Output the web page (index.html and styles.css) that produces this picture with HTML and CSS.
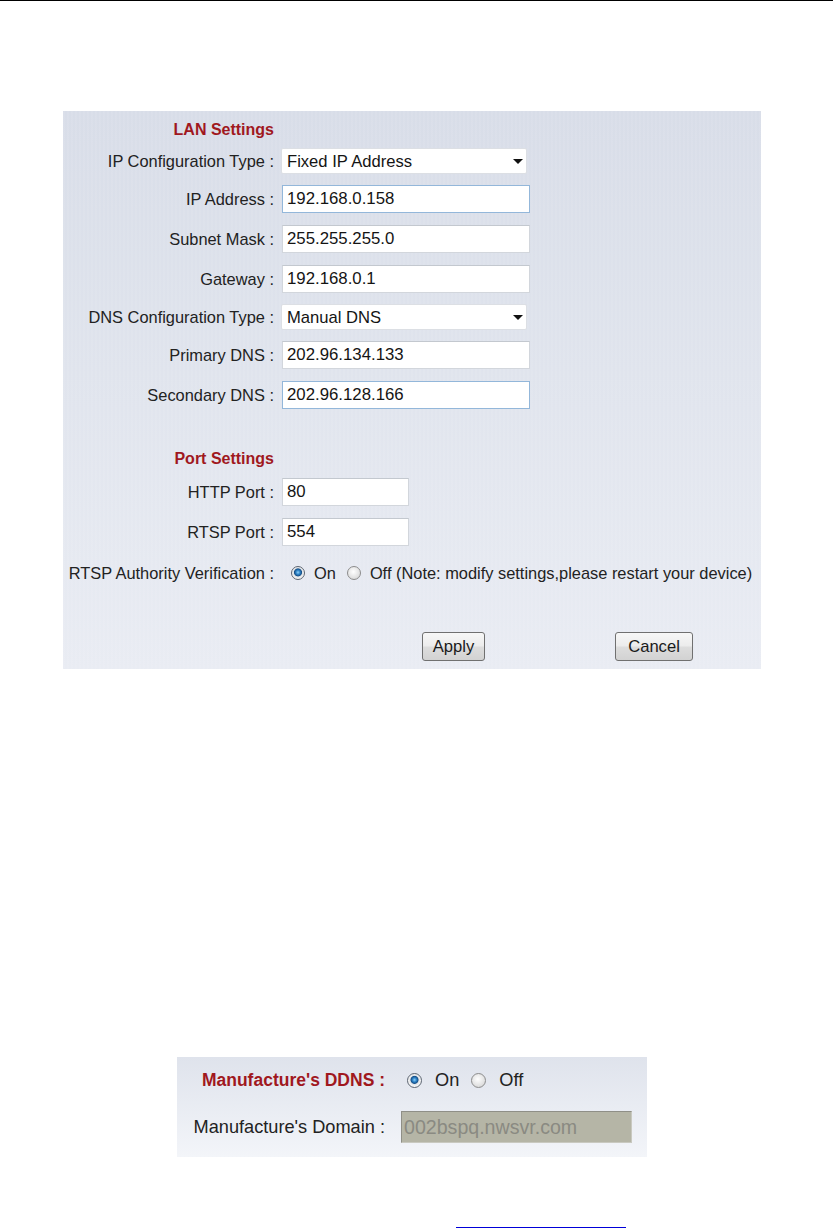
FILE: index.html
```html
<!DOCTYPE html>
<html lang="en">
<head>
    <meta charset="UTF-8">
    <title>Network Settings</title>
    <link rel="stylesheet" href="styles.css">
</head>
<body>

<div class="top-rule"></div>

<div class="panel">
    <div class="row head">
        <span class="title">LAN Settings</span>
    </div>
    <div class="row sel">
        <label>IP Configuration Type :</label>
        <span class="select-wrap">
            <select>
                <option>Fixed IP Address</option>
                <option>DHCP</option>
            </select>
        </span>
    </div>
    <div class="row">
        <label>IP Address :</label>
        <input type="text" class="hl" value="192.168.0.158">
    </div>
    <div class="row">
        <label>Subnet Mask :</label>
        <input type="text" value="255.255.255.0">
    </div>
    <div class="row">
        <label>Gateway :</label>
        <input type="text" value="192.168.0.1">
    </div>
    <div class="row sel">
        <label>DNS Configuration Type :</label>
        <span class="select-wrap">
            <select>
                <option>Manual DNS</option>
                <option>From DHCP Server</option>
            </select>
        </span>
    </div>
    <div class="row">
        <label>Primary DNS :</label>
        <input type="text" value="202.96.134.133">
    </div>
    <div class="row">
        <label>Secondary DNS :</label>
        <input type="text" class="hl" value="202.96.128.166">
    </div>

    <div class="row head port-head">
        <span class="title">Port Settings</span>
    </div>
    <div class="row">
        <label>HTTP Port :</label>
        <input type="text" class="short" value="80">
    </div>
    <div class="row">
        <label>RTSP Port :</label>
        <input type="text" class="short" value="554">
    </div>
    <div class="row radio-row">
        <label>RTSP Authority Verification :</label>
        <span class="choices">
            <input type="radio" name="rtsp" id="rtspOn" checked>
            <label for="rtspOn" class="opt">On</label>
            <input type="radio" name="rtsp" id="rtspOff">
            <label for="rtspOff" class="opt">Off (Note: modify settings,please restart your device)</label>
        </span>
    </div>

    <div class="actions">
        <button class="apply">Apply</button>
        <button class="cancel">Cancel</button>
    </div>
</div>

<div class="ddns">
    <div class="drow">
        <span class="dtitle">Manufacture's DDNS :</span>
        <span class="choices">
            <input type="radio" name="ddns" id="ddnsOn" checked>
            <label for="ddnsOn" class="opt">On</label>
            <input type="radio" name="ddns" id="ddnsOff">
            <label for="ddnsOff" class="opt">Off</label>
        </span>
    </div>
    <div class="drow domain">
        <label>Manufacture's Domain :</label>
        <input type="text" class="disabled" value="002bspq.nwsvr.com" disabled>
    </div>
</div>

<div class="link-line"></div>

</body>
</html>
```

FILE: styles.css
```css
* {
    box-sizing: border-box;
}

body {
    margin: 0;
    background: #fff;
    color: #222;
    font-family: 'Liberation Sans', Arial, sans-serif;
    font-size: 16.4px;
}

.top-rule {
    width: 833px;
    height: 1px;
    background: #000;
}

.panel {
    margin: 110px 0 0 63px;
    width: 698px;
    height: 558px;
    padding-top: 6px;
    background:
        repeating-linear-gradient(90deg, rgba(255, 255, 255, 0.07) 0 2px, transparent 2px 4px),
        linear-gradient(#d8dde8, #e9ecf3);
}

.row {
    display: grid;
    grid-template-columns: 211px auto;
    column-gap: 7px;
    align-items: center;
    height: 40px;
}

.row.sel {
    height: 36px;
}

.row.head {
    height: 26px;
}

.row.port-head {
    margin-top: 31px;
}

.row.radio-row {
    height: 42px;
}

.row > label,
.row .title {
    text-align: right;
    white-space: nowrap;
}

.title {
    color: #a0181e;
    font-weight: bold;
    font-size: 16px;
}

input[type="text"] {
    width: 248px;
    height: 28px;
    margin-left: 1px;
    padding: 0 4px;
    border: 1px solid #d2d6dc;
    border-top-color: #c3c8cf;
    background: #fff;
    font-family: 'Liberation Sans', Arial, sans-serif;
    font-size: 16.8px;
    color: #141414;
}

input.hl {
    border-color: #93b7da;
}

input.short {
    width: 127px;
}

.select-wrap {
    position: relative;
    display: inline-block;
    width: 246px;
}

.select-wrap::after {
    content: "";
    position: absolute;
    right: 4px;
    top: 11px;
    border-left: 5px solid transparent;
    border-right: 5px solid transparent;
    border-top: 5px solid #111;
    pointer-events: none;
}

select {
    appearance: none;
    -webkit-appearance: none;
    width: 246px;
    height: 26px;
    padding: 0 5px;
    border: 1px solid #dcdfe4;
    border-radius: 2px;
    background: #fff;
    font-family: 'Liberation Sans', Arial, sans-serif;
    font-size: 16.6px;
    color: #141414;
}

.choices {
    display: flex;
    align-items: center;
    white-space: nowrap;
}

input[type="radio"] {
    appearance: none;
    -webkit-appearance: none;
    width: 14px;
    height: 14px;
    margin: 0;
    border: 1px solid #8c8c8c;
    border-radius: 50%;
    background: radial-gradient(circle at 45% 40%, #ffffff, #cfcfcf);
}

input[type="radio"]:checked {
    border-color: #5b6470;
    background: radial-gradient(circle at 50% 45%, #8fd0f7 0, #2f85c8 2px, #154f88 3.6px, #dfe2e5 4.4px, #f7f7f7 6.5px);
}

.radio-row input[type="radio"] {
    margin-left: 10px;
}

.radio-row .opt {
    margin-left: 9px;
}

.radio-row #rtspOff {
    margin-left: 11px;
}

.actions {
    display: flex;
    gap: 130px;
    margin-top: 38px;
    padding-left: 359px;
}

button {
    height: 29px;
    padding: 0;
    border: 1px solid #707070;
    border-radius: 3px;
    background: linear-gradient(#f7f7f7, #ececec 48%, #dddddd 52%, #d2d2d2);
    font-family: 'Liberation Sans', Arial, sans-serif;
    font-size: 16.6px;
    color: #1a1a1a;
}

.apply {
    width: 63px;
}

.cancel {
    width: 78px;
}

.ddns {
    margin: 388px 0 0 177px;
    width: 470px;
    height: 100px;
    padding-top: 10px;
    background: linear-gradient(#dfe3ec, #f3f5f9);
    font-size: 18.2px;
}

.drow {
    display: grid;
    grid-template-columns: 208px auto;
    column-gap: 16px;
    align-items: center;
    height: 26px;
}

.drow.domain {
    height: 32px;
    margin-top: 18px;
}

.dtitle,
.drow > label {
    text-align: right;
    white-space: nowrap;
}

.dtitle {
    color: #a0181e;
    font-weight: bold;
    font-size: 17.5px;
}

.drow input[type="radio"] {
    width: 15px;
    height: 15px;
    margin-left: 6px;
}

.drow .opt {
    margin-left: 13px;
}

.drow #ddnsOff {
    margin-left: 12px;
}

input.disabled {
    width: 231px;
    height: 32px;
    margin: 0;
    padding: 0 2px;
    border: 1px solid #8f8f87;
    border-right-color: #c9c9c0;
    border-bottom-color: #c9c9c0;
    background: #b5b5a6;
    font-size: 19.6px;
    color: #8a8a82;
}

.link-line {
    margin: 70px 0 0 456px;
    width: 170px;
    height: 1px;
    background: #0000d8;
}
```
